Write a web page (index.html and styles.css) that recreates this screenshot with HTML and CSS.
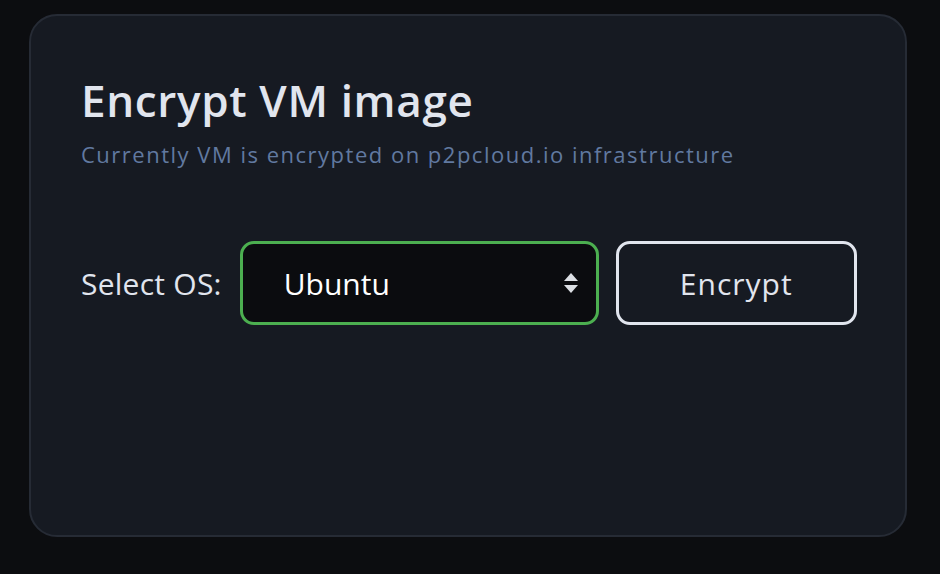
FILE: index.html
```html
<!DOCTYPE html>
<html lang="en">
<head>
<meta charset="utf-8">
<title>Encrypt VM image</title>
<link rel="stylesheet" href="styles.css">
</head>
<body>
<div class="page">
  <section class="card">
    <h1 class="title">Encrypt VM image</h1>
    <p class="subtitle">Currently VM is encrypted on p2pcloud.io infrastructure</p>
    <div class="row">
      <label class="label" for="os">Select OS:</label>
      <div class="select">
        <span class="select-value">Ubuntu</span>
        <svg class="select-arrow" width="16" height="22" viewBox="0 0 16 22"><path d="M8 1 L15 9 H1 Z M1 13 H15 L8 21 Z" fill="#dcdfe4"/></svg>
      </div>
      <button class="btn" type="button">Encrypt</button>
    </div>
  </section>
</div>
</body>
</html>
```
FILE: styles.css
```css
html, body {
  margin: 0;
  padding: 0;
  background: #0c0d10;
}
.page {
  padding: 14px 33px 37px 29px;
  height: 574px;
  box-sizing: border-box;
}
.card {
  box-sizing: border-box;
  height: 523px;
  background: #161a22;
  border: 2px solid #262b35;
  border-radius: 28px;
  padding: 62px 40px 0 50px;
  font-family: "Open Sans", "Noto Sans", sans-serif;
}
.title {
  margin: 0;
  font-size: 44px;
  font-weight: 600;
  line-height: 44px;
  color: #e1e5ee;
  letter-spacing: 0.65px;
}
.subtitle {
  margin: 18px 0 0 0;
  font-size: 22px;
  line-height: 28px;
  color: #6179a0;
  letter-spacing: 1.5px;
}
.row {
  display: flex;
  align-items: center;
  margin-top: 73px;
}
.label {
  flex: none;
  white-space: nowrap;
  font-size: 30px;
  color: #e1e5ee;
  margin-right: 18px;
  letter-spacing: 0.25px;
}
.select {
  flex: none;
  box-sizing: border-box;
  width: 359px;
  height: 84px;
  border: 3px solid #4caf50;
  border-radius: 14px;
  background: #0b0c0f;
  display: flex;
  align-items: center;
  justify-content: space-between;
  padding: 0 17px 0 41px;
}
.select-value {
  font-size: 30px;
  font-weight: 500;
  color: #ffffff;
}
.btn {
  flex: none;
  box-sizing: border-box;
  margin-left: 17px;
  width: 241px;
  height: 84px;
  border: 3px solid #e1e5ee;
  border-radius: 14px;
  background: transparent;
  color: #e1e5ee;
  font-family: "Open Sans", sans-serif;
  font-size: 30px;
  font-weight: 500;
  letter-spacing: 1px;
}
```
